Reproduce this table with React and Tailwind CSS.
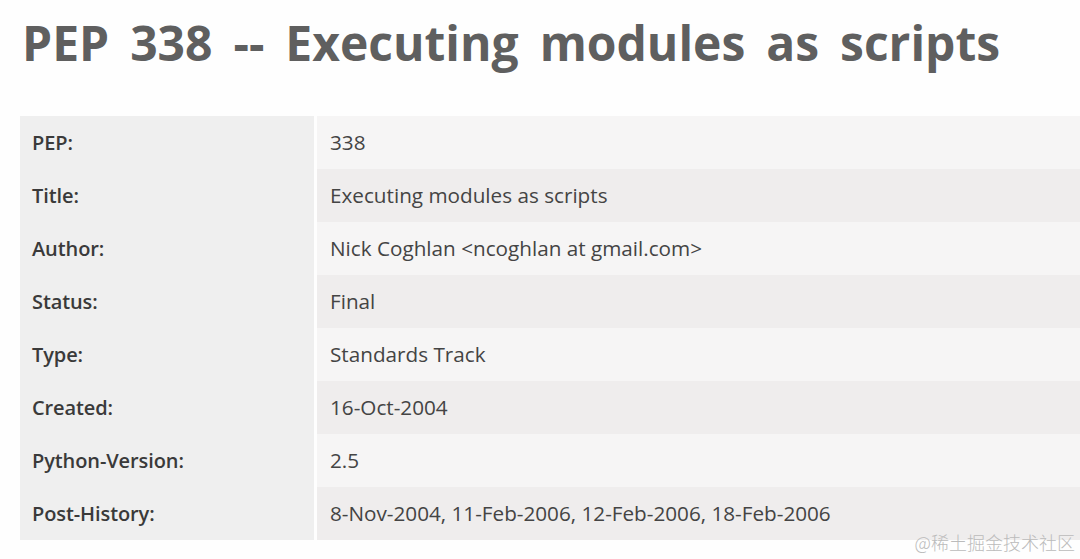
const rows = [
  ['PEP:', '338'],
  ['Title:', 'Executing modules as scripts'],
  ['Author:', 'Nick Coghlan <ncoghlan at gmail.com>'],
  ['Status:', 'Final'],
  ['Type:', 'Standards Track'],
  ['Created:', '16-Oct-2004'],
  ['Python-Version:', '2.5'],
  ['Post-History:', '8-Nov-2004, 11-Feb-2006, 12-Feb-2006, 18-Feb-2006'],
]

export default function App() {
  return (
    <div className="relative w-[1080px] h-[559px] overflow-hidden bg-[#fefefe] font-['Open_Sans',sans-serif]">
      <h1 className="pl-[22px] pt-[11px] h-[116px] text-[48px] leading-[64px] font-bold text-[#5f5f5f] [word-spacing:8.5px]">
        PEP 338 -- Executing modules as scripts
      </h1>
      <div className="ml-[20px] grid grid-cols-[294px_1fr] gap-x-[3px]">
        {rows.map(([k, v], i) => (
          <div key={k} className="contents">
            <div className="h-[53px] flex items-center pl-[12px] bg-[#efefef] text-[20px] font-semibold text-[#3a3a3a] tracking-[-0.1px]">
              {k}
            </div>
            <div
              className={`h-[53px] flex items-center pl-[13px] text-[20.7px] text-[#444] ${i % 2 === 0 ? 'bg-[#f6f5f5]' : 'bg-[#efeded]'}`}
            >
              {v}
            </div>
          </div>
        ))}
      </div>
      <div className="absolute right-[5px] bottom-[3px] text-[18px] text-[#bbbbbb] font-['Noto_Sans_CJK_SC',sans-serif] font-light">
        @稀土掘金技术社区
      </div>
    </div>
  )
}
